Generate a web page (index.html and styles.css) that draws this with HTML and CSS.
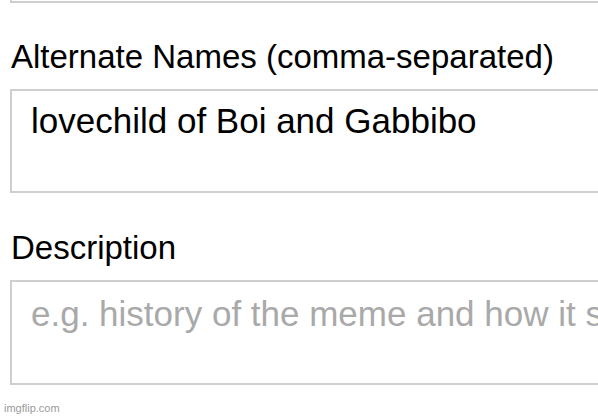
FILE: index.html
```html
<!DOCTYPE html>
<html lang="en">
<head>
<meta charset="utf-8">
<title>Meme form</title>
<link rel="stylesheet" href="styles.css">
</head>
<body>
<div class="form">
  <div class="box box-cut"></div>
  <div class="label label-first">Alternate Names (comma-separated)</div>
  <div class="box">lovechild of Boi and Gabbibo</div>
  <div class="label">Description</div>
  <div class="box box-desc placeholder">e.g. history of the meme and how it started</div>
</div>
<div class="watermark">imgflip.com</div>
</body>
</html>
```
FILE: styles.css
```css
html, body {
  margin: 0;
  padding: 0;
  background: #ffffff;
  overflow: hidden;
}
body {
  width: 598px;
  height: 417px;
  position: relative;
  font-family: "Liberation Sans", Arial, Helvetica, sans-serif;
}
.form {
  width: 640px;
  margin-left: 10px;
  display: flex;
  flex-direction: column;
}
.box {
  box-sizing: border-box;
  border: 2px solid #cfcfcf;
  height: 104px;
  padding: 10px 19px 0 19px;
  font-size: 35px;
  line-height: 40px;
  color: #000;
  white-space: nowrap;
  overflow: hidden;
}
.box-cut {
  height: 3px;
  border-top: none;
  padding: 0;
}
.box-desc {
  height: 105px;
  padding-top: 12px;
}
.placeholder {
  color: #a9a9a9;
}
.label {
  font-size: 33px;
  line-height: 40px;
  color: #000;
  margin: 35px 0 12px 1px;
  white-space: nowrap;
}
.label-first {
  margin-top: 34px;
}
.watermark {
  position: absolute;
  left: 4px;
  top: 401px;
  font-size: 11px;
  line-height: 14px;
  color: #9a9a9a;
}
```
